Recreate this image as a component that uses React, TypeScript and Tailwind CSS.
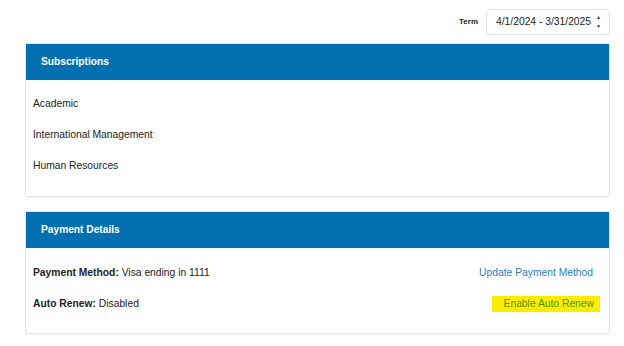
import React from "react";

const subscriptions = ["Academic", "International Management", "Human Resources"];

function Card({ title, bodyPad, children }: { title: string; bodyPad: string; children: React.ReactNode }) {
  return (
    <div className="rounded-[3px] border border-[#e6e6e6] bg-white shadow-[0_1px_2px_rgba(0,0,0,0.04)]">
      <div className="flex h-[36px] items-center bg-[#0270b0] px-[15px] text-[10.2px] font-bold text-white">
        {title}
      </div>
      <div className={`px-[7px] text-[10.3px] text-[#222] ${bodyPad}`}>{children}</div>
    </div>
  );
}

export default function App() {
  return (
    <div className="h-[346px] w-[624px] bg-white font-['Liberation_Sans',Arial,sans-serif]">
      <div className="ml-[25px] w-[585px] pt-[9px]">
        <div className="flex items-center justify-end">
          <span className="mr-[8px] text-[8px] font-bold text-[#222]">Term</span>
          <div className="flex h-[26px] w-[124px] items-center justify-between whitespace-nowrap rounded-[3px] border border-[#e3e3e3] pl-[9px] pr-[8px] text-[10.3px] text-[#222]">
            <span>4/1/2024 - 3/31/2025</span>
            <span className="flex flex-col items-center gap-[4px] text-[5px] leading-[5px] text-[#333]">
              <span>▲</span>
              <span>▼</span>
            </span>
          </div>
        </div>

        <div className="mt-[8px]">
          <Card title="Subscriptions" bodyPad="pt-[8px] pb-[15px]">
            {subscriptions.map((s) => (
              <div key={s} className="flex h-[31px] items-center">
                {s}
              </div>
            ))}
          </Card>
        </div>

        <div className="mt-[14px]">
          <Card title="Payment Details" bodyPad="pt-[9px] pb-[14px]">
            <div className="flex h-[31px] items-center justify-between pr-[9px]">
              <div>
                <span className="font-bold">Payment Method:</span> Visa ending in 1111
              </div>
              <a className="text-[#2f7ec0]">Update Payment Method</a>
            </div>
            <div className="flex h-[31px] items-center justify-between pr-[2px]">
              <div>
                <span className="font-bold">Auto Renew:</span> Disabled
              </div>
              <a className="flex h-[16px] w-[108px] items-center justify-end whitespace-nowrap bg-[#ffeb00] pr-[6px] text-[#3f9a1c]">
                Enable Auto Renew
              </a>
            </div>
          </Card>
        </div>
      </div>
    </div>
  );
}
